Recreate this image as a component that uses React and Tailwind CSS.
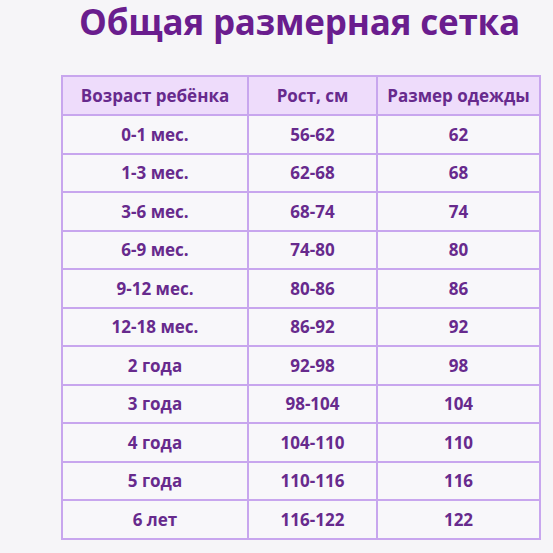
const rows = [
  ['0-1 мес.', '56-62', '62'],
  ['1-3 мес.', '62-68', '68'],
  ['3-6 мес.', '68-74', '74'],
  ['6-9 мес.', '74-80', '80'],
  ['9-12 мес.', '80-86', '86'],
  ['12-18 мес.', '86-92', '92'],
  ['2 года', '92-98', '98'],
  ['3 года', '98-104', '104'],
  ['4 года', '104-110', '110'],
  ['5 года', '110-116', '116'],
  ['6 лет', '116-122', '122'],
]

export default function App() {
  return (
    <div className="w-[553px] h-[553px] bg-[#f6f5f8] overflow-hidden font-['Open_Sans',sans-serif]">
      <h1 className="pl-[79px] h-[75px] text-[35px] leading-[44px] font-bold text-[#6a1d8e] tracking-[-0.2px] whitespace-nowrap">
        Общая размерная сетка
      </h1>
      <table className="ml-[61px] w-[480px] border-collapse border-2 border-[#c8a6ee] text-[17px] font-bold text-[#672a8d] text-center">
        <thead>
          <tr className="h-[39px] bg-[#eedcfb]">
            <th className="w-[186px] border-2 border-[#c8a6ee] font-bold">Возраст ребёнка</th>
            <th className="w-[129px] border-2 border-[#c8a6ee] font-bold">Рост, см</th>
            <th className="border-2 border-[#c8a6ee] font-bold">Размер одежды</th>
          </tr>
        </thead>
        <tbody className="bg-[#f8f7fa]">
          {rows.map((r) => (
            <tr key={r[0]} className="h-[38.5px]">
              <td className="border-2 border-[#c8a6ee]">{r[0]}</td>
              <td className="border-2 border-[#c8a6ee]">{r[1]}</td>
              <td className="border-2 border-[#c8a6ee]">{r[2]}</td>
            </tr>
          ))}
        </tbody>
      </table>
    </div>
  )
}
